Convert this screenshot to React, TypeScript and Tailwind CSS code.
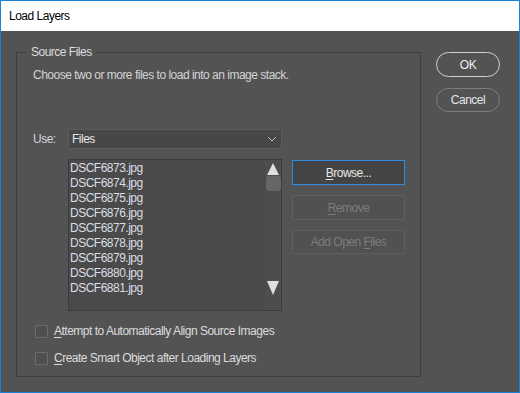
import React from "react";

const files = [
  "DSCF6873.jpg",
  "DSCF6874.jpg",
  "DSCF6875.jpg",
  "DSCF6876.jpg",
  "DSCF6877.jpg",
  "DSCF6878.jpg",
  "DSCF6879.jpg",
  "DSCF6880.jpg",
  "DSCF6881.jpg",
];

function Checkbox({ first, rest }: { first: string; rest: string }) {
  return (
    <div className="flex items-center h-[14px]">
      <div className="w-[13px] h-[13px] border border-[#6c6c6c] bg-[#4f4f4f] rounded-[1px]" />
      <span className="ml-[6px] text-[#dcdcdc] leading-[14px]">
        <span className="underline underline-offset-2">{first}</span>
        {rest}
      </span>
    </div>
  );
}

export default function App() {
  return (
    <div
      className="w-[520px] h-[393px] border border-[#1883d7] flex flex-col bg-[#535353] text-[12px] tracking-[-0.5px] overflow-hidden"
      style={{ fontFamily: '"Liberation Sans", Arial, sans-serif' }}
    >
      <div className="h-[30px] shrink-0 bg-white flex items-center pl-[8px] text-[12px] text-black">
        Load Layers
      </div>
      <div className="flex-1 flex pl-[15px] pt-[21px]">
        <div className="relative w-[405px] h-[325px] border border-[#3e3e3e] shrink-0">
          <span className="absolute left-[10px] top-[-9px] px-[4px] bg-[#535353] text-[#dcdcdc] leading-[16px]">
            Source Files
          </span>
          <div className="flex flex-col pt-[14px] pl-[16px]">
            <div className="text-[#d4d4d4] leading-[16px]">
              Choose two or more files to load into an image stack.
            </div>
            <div className="flex items-center mt-[46px] h-[20px]">
              <span className="w-[35px] text-[#d4d4d4]">Use:</span>
              <div className="w-[214px] h-[20px] border border-[#5c5c5c] bg-[#474747] flex items-center justify-between pl-[3px] pr-[4px] text-[#e6e6e6]">
                <span>Files</span>
                <svg width="10" height="6" viewBox="0 0 10 6">
                  <path d="M1 1 L5 5 L9 1" stroke="#bdbdbd" strokeWidth="1" fill="none" />
                </svg>
              </div>
            </div>
            <div className="flex mt-[10px] pl-[35px]">
              <div className="w-[214px] h-[152px] border border-[#3b3b3b] bg-[#4a4a4a] flex">
                <div className="flex-1 flex flex-col pt-[1px]">
                  {files.map((f) => (
                    <div key={f} className="h-[15px] leading-[15px] text-[#dadde4] pl-[1px]">
                      {f}
                    </div>
                  ))}
                </div>
                <div className="w-[16px] bg-[#4d4d4d] flex flex-col items-center pt-[3px] pb-[15px]">
                  <svg width="12" height="12" viewBox="0 0 12 12">
                    <path d="M6 0 L12 12 L0 12 Z" fill="#e0e0e0" />
                  </svg>
                  <div className="w-[15px] h-[15px] mt-[1px] rounded-[3px] bg-[#666666]" />
                  <div className="flex-1" />
                  <svg width="12" height="14" viewBox="0 0 12 14">
                    <path d="M0 0 L12 0 L6 14 Z" fill="#e0e0e0" />
                  </svg>
                </div>
              </div>
              <div className="flex flex-col gap-[10px] ml-[10px] pt-[1px]">
                <div className="w-[113px] h-[25px] border border-[#2b8ee6] bg-[#444444] flex items-center justify-center text-[#e8e8e8]">
                  <span>
                    <span className="underline underline-offset-2">B</span>rowse...
                  </span>
                </div>
                <div className="w-[113px] h-[25px] border border-[#5f5f5f] bg-[#515151] flex items-center justify-center text-[#7c7c7c]">
                  <span>
                    <span className="underline underline-offset-2">R</span>emove
                  </span>
                </div>
                <div className="w-[113px] h-[24px] border border-[#5f5f5f] bg-[#515151] flex items-center justify-center text-[#7c7c7c]">
                  <span>
                    Add Open <span className="underline underline-offset-2">F</span>iles
                  </span>
                </div>
              </div>
            </div>
            <div className="flex flex-col gap-[13px] mt-[13px] pl-[2px]">
              <Checkbox first="A" rest="ttempt to Automatically Align Source Images" />
              <Checkbox first="C" rest="reate Smart Object after Loading Layers" />
            </div>
          </div>
        </div>
        <div className="flex flex-col gap-[11px] ml-[15px]">
          <div className="w-[64px] h-[25px] rounded-full border border-[#cfcfcf] flex items-center justify-center text-[#f0f0f0]">
            OK
          </div>
          <div className="w-[64px] h-[24px] rounded-full border border-[#7d7d7d] flex items-center justify-center text-[#e6e6e6]">
            Cancel
          </div>
        </div>
      </div>
    </div>
  );
}
